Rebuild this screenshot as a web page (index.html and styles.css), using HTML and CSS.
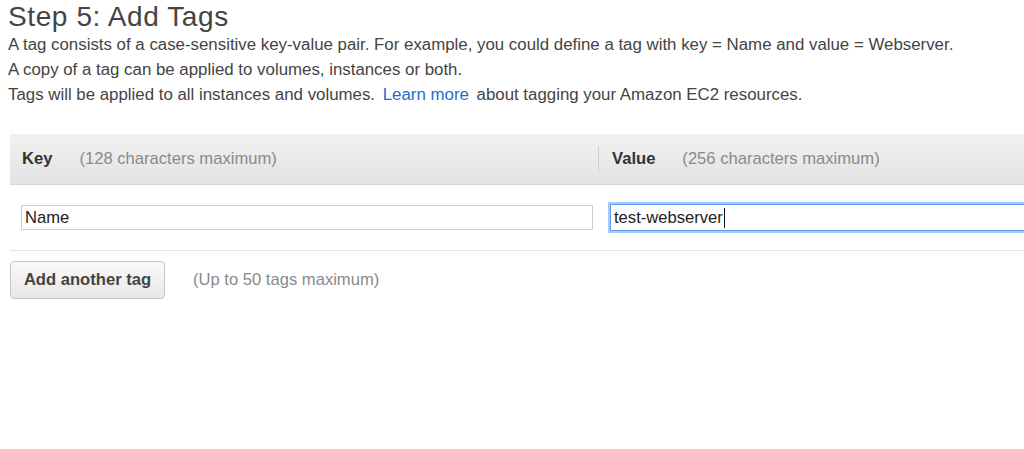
FILE: index.html
```html
<!DOCTYPE html>
<html lang="en">
<head>
<meta charset="utf-8">
<title>Step 5: Add Tags</title>
<link rel="stylesheet" href="styles.css">
</head>
<body>
<div class="page">
  <h1 class="title">Step 5: Add Tags</h1>
  <p class="desc">A tag consists of a case-sensitive key-value pair. For example, you could define a tag with key = Name and value = Webserver.</p>
  <p class="desc">A copy of a tag can be applied to volumes, instances or both.</p>
  <p class="desc">Tags will be applied to all instances and volumes. <a class="link" href="#">Learn more</a> about tagging your Amazon EC2 resources.</p>

  <div class="tags">
    <div class="tags-head">
      <div class="head-cell head-key">
        <span class="head-label">Key</span>
        <span class="head-hint">(128 characters maximum)</span>
      </div>
      <div class="head-cell head-value">
        <div class="head-inner">
          <span class="head-label">Value</span>
          <span class="head-hint">(256 characters maximum)</span>
        </div>
      </div>
    </div>
    <div class="tags-row">
      <div class="row-cell cell-key">
        <div class="field">Name</div>
      </div>
      <div class="row-cell cell-value">
        <div class="field field-focus">test-webserver<span class="caret"></span></div>
      </div>
    </div>
  </div>

  <div class="actions">
    <button class="btn" type="button">Add another tag</button>
    <span class="actions-hint">(Up to 50 tags maximum)</span>
  </div>
</div>
</body>
</html>
```

FILE: styles.css
```css
html, body {
  margin: 0;
  padding: 0;
  background: #ffffff;
  overflow: hidden;
}

body {
  font-family: "Liberation Sans", Arial, Helvetica, sans-serif;
  color: #444444;
}

.page {
  padding: 0 0 0 8px;
}

.title {
  margin: 0;
  padding-top: 2px;
  font-size: 28px;
  line-height: 30px;
  letter-spacing: 0.6px;
  font-weight: normal;
  color: #444444;
}

.desc {
  margin: 0;
  font-size: 16.85px;
  line-height: 25px;
}

.link {
  color: #1b6fc8;
  text-decoration: none;
  margin: 0 3px;
}

.tags {
  margin-top: 27px;
  margin-left: 2px;
  width: 1176px;
}

.tags-head {
  display: grid;
  grid-template-columns: 588px 588px;
  height: 50px;
  background: linear-gradient(#f1f1f1, #e3e3e3);
  border-bottom: 1px solid #d6d6d6;
}

.head-cell {
  display: flex;
  align-items: center;
  font-size: 16.6px;
}

.head-key {
  padding-left: 12px;
}

.head-inner {
  display: flex;
  align-items: center;
  height: 26px;
  border-left: 1px solid #cfcfcf;
  padding-left: 13px;
}

.head-label {
  font-weight: bold;
  color: #333333;
  margin-right: 27px;
}

.head-hint {
  color: #8a8a8a;
}

.tags-row {
  display: grid;
  grid-template-columns: 588px 588px;
  height: 65px;
  align-items: center;
  border-bottom: 1px solid #e3e3e3;
}

.cell-key {
  padding-left: 11px;
  padding-right: 5px;
}

.cell-value {
  padding-left: 12px;
}

.field {
  box-sizing: border-box;
  height: 25px;
  border: 1px solid #cccccc;
  padding: 0 3px;
  font-size: 16.6px;
  line-height: 23px;
  color: #222222;
  display: flex;
  align-items: center;
}

.field-focus {
  height: 27px;
  border: 1px solid #5b9df2;
  box-shadow: 0 0 0 2px #a9c9f7;
}

.caret {
  display: inline-block;
  width: 1px;
  height: 20px;
  background: #111111;
  margin-left: 1px;
}

.actions {
  display: flex;
  align-items: center;
  margin-top: 10px;
  margin-left: 2px;
}

.btn {
  box-sizing: border-box;
  width: 155px;
  height: 38px;
  border: 1px solid #c6c6c6;
  border-radius: 4px;
  background: linear-gradient(#fafafa, #e8e8e8);
  font-family: "Liberation Sans", Arial, Helvetica, sans-serif;
  font-size: 16.6px;
  font-weight: bold;
  color: #444444;
  padding: 0;
}

.actions-hint {
  margin-left: 28px;
  font-size: 16.6px;
  color: #8a8a8a;
}
```
